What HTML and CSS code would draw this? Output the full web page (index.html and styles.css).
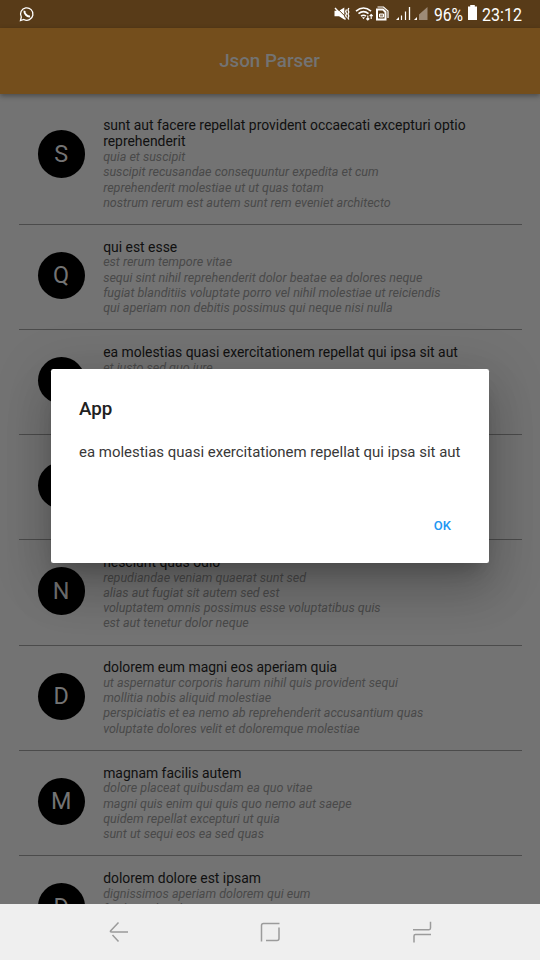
FILE: index.html
```html
<!DOCTYPE html>
<html lang="en">
<head>
<meta charset="utf-8">
<title>Json Parser</title>
<link rel="stylesheet" href="styles.css">
</head>
<body>
<div class="screen">
  <header class="status">
    <svg class="chat" width="16" height="16" viewBox="0 0 16 16" fill="none" stroke="#fff"><path d="M1.500 14.500 2.300 11A6.200 6.200 0 1 1 4.800 13.500Z" stroke-width="1.300"/><path d="M5.500 4.700C5 7.500 8 10.900 11 10.300" stroke-width="2"/></svg>
    <svg class="icons" width="96" height="16" viewBox="0 0 96 16" fill="none" stroke="#fff">
      <path d="M.5 4.800H5L10.300 1.500V13.500L5 10.200H.5Z" fill="#fff" stroke="none"/><path d="M2.300 1.500 12 11.200" stroke="#583b18" stroke-width="1"/><path d="M1 2 11.500 13.500" stroke-width="1.400"/>
      <path d="M12.500 3.500l-.8 2 .8 2-.8 2 .8 2M14.800 2l-.8 2 .8 2-.8 2 .8 2-.8 2 .8 1.500" stroke-width="1.300"/>
      <path d="M22 5.200Q29.500-1.200 37 5.200M24.500 7.700Q29.500 3.600 34.500 7.700M27 10.200Q29.500 8.200 32 10.200" stroke-width="1.600"/><path d="M28 11.300 29.500 13.300 31 11.300Z" fill="#fff" stroke="none"/><path d="M33.800 9.500v4.500M32.300 12.500l1.500 1.500 1.500-1.500M37.200 13V8.500M35.700 10l1.500-1.500 1.500 1.500" stroke-width="1.100"/>
      <path d="M43 3.500H49L51.500 6V13.500H43Z" stroke-width="2"/><path d="M43.500 1H49.500L54 5V12" stroke-width="1.200"/><path d="M45.500 8H49.500V11H45.500Z" fill="#9d8a76" stroke-width="1"/>
      <path d="M62 14 65 11V14Z" fill="#fff" stroke="none"/><path d="M67.500 14V9.500M71.500 14V5.500" stroke-width="1.200"/><path d="M75.500 14V1" stroke-width="1.300"/>
      <path d="M80 14 83 11V14Z" fill="#fff" stroke="none"/><path d="M85 14V8.500L93.500 1V14Z" fill="#9d8a76" stroke="none"/>
    </svg>
    <span class="percent">96%</span>
    <svg class="battery" width="9" height="15" viewBox="0 0 9 15"><path d="M2.200 0H6.800V1.500H9V15H0V1.500H2.200Z" fill="#fff"/></svg>
    <span class="clock">23:12</span>
  </header>
  <div class="appbar"><h1>Json Parser</h1></div>
  <main class="list">
    <article class="row"><div class="avatar">S</div><div class="text"><h2>sunt aut facere repellat provident occaecati excepturi optio<br>reprehenderit</h2><p>quia et suscipit<br>suscipit recusandae consequuntur expedita et cum<br>reprehenderit molestiae ut ut quas totam<br>nostrum rerum est autem sunt rem eveniet architecto</p></div></article>
    <article class="row"><div class="avatar">Q</div><div class="text"><h2>qui est esse</h2><p>est rerum tempore vitae<br>sequi sint nihil reprehenderit dolor beatae ea dolores neque<br>fugiat blanditiis voluptate porro vel nihil molestiae ut reiciendis<br>qui aperiam non debitis possimus qui neque nisi nulla</p></div></article>
    <article class="row"><div class="avatar"></div><div class="text"><h2>ea molestias quasi exercitationem repellat qui ipsa sit aut</h2><p>et iusto sed quo iure</p></div></article>
    <article class="row"><div class="avatar"></div></article>
    <article class="row"><div class="avatar">N</div><div class="text"><h2>nesciunt quas odio</h2><p>repudiandae veniam quaerat sunt sed<br>alias aut fugiat sit autem sed est<br>voluptatem omnis possimus esse voluptatibus quis<br>est aut tenetur dolor neque</p></div></article>
    <article class="row"><div class="avatar">D</div><div class="text"><h2>dolorem eum magni eos aperiam quia</h2><p>ut aspernatur corporis harum nihil quis provident sequi<br>mollitia nobis aliquid molestiae<br>perspiciatis et ea nemo ab reprehenderit accusantium quas<br>voluptate dolores velit et doloremque molestiae</p></div></article>
    <article class="row"><div class="avatar">M</div><div class="text"><h2>magnam facilis autem</h2><p>dolore placeat quibusdam ea quo vitae<br>magni quis enim qui quis quo nemo aut saepe<br>quidem repellat excepturi ut quia<br>sunt ut sequi eos ea sed quas</p></div></article>
    <article class="row"><div class="avatar">D</div><div class="text"><h2>dolorem dolore est ipsam</h2><p>dignissimos aperiam dolorem qui eum<br>facilis quibusdam</p></div></article>
  </main>
  <nav class="navbar">
    <svg width="20" height="22" viewBox="0 0 20 22"><path d="M9.500 1.500 1.500 10Q1 11 2.500 11H19M3.500 14 9.500 20.500"/></svg>
    <svg class="home" width="20" height="22" viewBox="0 0 20 22"><path d="M1.500 20.500V4.500Q1.500 2.500 3.500 2.500H19.500M19 6.500V17.500Q19 19.500 17 19.500H6"/></svg>
    <svg width="20" height="22" viewBox="0 0 20 22"><path d="M1 8.700H17Q18.500 8.700 18.500 7V.7M19 13.500H3.500Q2 13.500 2 15V21.500"/></svg>
  </nav>
  <section class="dialog">
    <h3>App</h3>
    <p>ea molestias quasi exercitationem repellat qui ipsa sit aut</p>
    <button>OK</button>
  </section>
</div>
</body>
</html>
```
FILE: styles.css
```css
* { box-sizing: border-box; margin: 0; }
body { font-family: Roboto, sans-serif; background: #737373; }
.screen { position: relative; width: 540px; height: 960px; overflow: hidden; display: flex; flex-direction: column; }
.status { height: 28px; flex: none; background: #583b18; display: flex; align-items: center; padding: 0 18px 0 19px; color: #fff; }
.icons { margin-left: auto; }
.percent, .clock { font-size: 18px; line-height: 28px; transform-origin: left center; padding-top: 2px; white-space: nowrap; }
.percent { width: 29px; margin-left: 4px; transform: scaleX(.87); }
.battery { margin: 0 5px 3px; }
.clock { width: 40px; transform: scaleX(.89); }
.appbar { height: 65.600px; flex: none; background: #744e1c; display: flex; align-items: center; justify-content: center; box-shadow: 0 2px 5px rgba(0, 0, 0, .35); z-index: 1; }
.appbar h1 { font-size: 18.750px; font-weight: 500; color: #737373; margin-right: 1px; }
.list { flex: 1; min-height: 0; overflow: hidden; padding: 9.900px 18px 0 18.750px; background: #737373; }
.row { display: flex; height: 105.200px; padding: 13.800px 18px 0 18.750px; border-bottom: 1px solid #4b4b4b; gap: 18.750px; }
.row:first-child { height: 121.400px; }
.avatar { flex: none; width: 47.200px; height: 47.200px; border-radius: 50%; background: #000; color: #737373; margin-top: 13.200px; font-size: 23.400px; display: flex; align-items: center; justify-content: center; }
.text { white-space: nowrap; margin-left: -.3px; }
.text h2 { font-size: 13.920px; font-weight: 400; line-height: 16.200px; color: #101010; }
.text p { font-size: 12.540px; font-style: italic; line-height: 15.120px; color: #494949; margin-top: -.4px; }
.navbar { height: 56px; flex: none; background: #efefef; display: flex; align-items: center; justify-content: space-between; padding: 0 108px 0 109px; }
.navbar svg { fill: none; stroke: #9b9b9b; stroke-width: 1.500; }
.navbar .home { margin-right: 1px; }
.dialog { position: absolute; left: 51px; top: 369px; width: 438px; height: 194px; background: #fff; border-radius: 2.300px; padding: 28px; z-index: 2; display: flex; flex-direction: column; box-shadow: 0 13px 18px -8px rgba(0, 0, 0, .2), 0 28px 45px 3px rgba(0, 0, 0, .14), 0 10px 54px 9px rgba(0, 0, 0, .12); }
.dialog h3 { font-size: 18.750px; line-height: 24px; font-weight: 500; color: #212121; }
.dialog p { font-size: 14.960px; line-height: 20px; margin-top: 21px; color: #383838; white-space: nowrap; }
.dialog button { border: 0; background: none; padding: 0; font: 500 13px/20px Roboto, sans-serif; color: #2196f3; align-self: flex-end; margin: 54px 10px 0 0; }
```
